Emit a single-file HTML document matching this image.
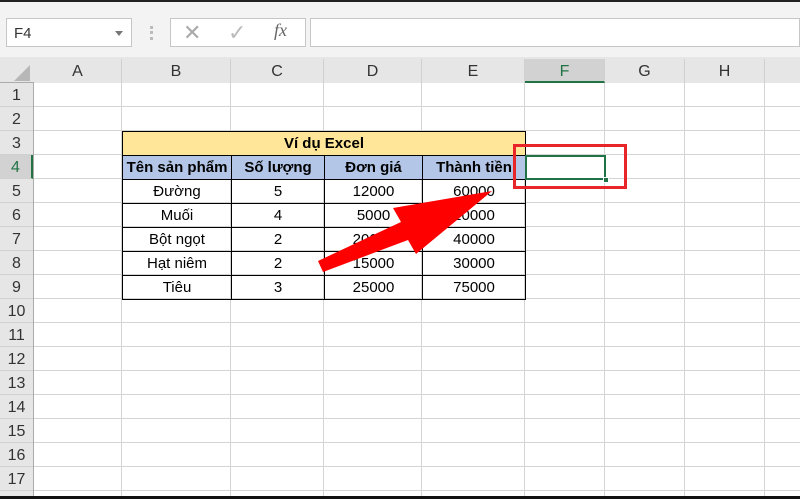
<!DOCTYPE html><html style="width:800px;height:499px;overflow:hidden"><head><meta charset="utf-8"><style>
*{margin:0;padding:0;box-sizing:border-box}
body{width:800px;height:499px;overflow:hidden;background:#e6e6e6;font-family:"Liberation Sans","DejaVu Sans",sans-serif;position:relative}
.a{position:absolute}
.hdr{position:absolute;background:#e6e6e6;color:#333;font-size:16px;text-align:center}
.vl{position:absolute;width:1px;background:#d4d4d4}
.hl{position:absolute;height:1px;background:#d4d4d4}
.c{position:absolute;border:1px solid #000;font-size:15px;text-align:center;line-height:24px;color:#000}
</style></head><body>
<div class="a" style="left:0;top:0;width:800px;height:2px;background:#222"></div>
<div class="a" style="left:0;top:2px;width:800px;height:55px;background:#f3f3f3"></div>
<div class="a" style="left:6px;top:18px;width:126px;height:29px;background:#fff;border:1px solid #c6c6c6;font-size:15px;padding:6px 0 0 7px;color:#333">F4<span style="position:absolute;right:8px;top:12px;border:4px solid transparent;border-top:5px solid #777"></span></div>
<div class="a" style="left:150px;top:26px;width:3px;height:14px;border-left:3px dotted #bbb"></div>
<div class="a" style="left:170px;top:18px;width:136px;height:29px;background:#fff;border:1px solid #c6c6c6"></div>
<div class="a" style="left:183px;top:20px;font-size:22px;color:#aaa">✕</div>
<div class="a" style="left:228px;top:20px;font-size:22px;color:#bbb">✓</div>
<div class="a" style="left:274px;top:20px;font-size:18px;color:#666;font-style:italic;font-family:'Liberation Serif',serif">fx</div>
<div class="a" style="left:310px;top:18px;width:490px;height:29px;background:#fff;border:1px solid #c6c6c6"></div>
<div class="a" style="left:34px;top:83px;width:766px;height:413px;background:#fff"></div>
<div class="a" style="left:0;top:59px;width:800px;height:24px;background:#e6e6e6;border-bottom:1px solid #ababab"></div>
<div class="a" style="left:0;top:83px;width:34px;height:413px;background:#e6e6e6;border-right:1px solid #ababab"></div>
<div class="a" style="left:14px;top:65px;width:0;height:0;border-left:16px solid transparent;border-bottom:16px solid #b7b7b7"></div>
<div id="g"></div>
<div class="a" style="left:0;top:496px;width:800px;height:3px;background:#111"></div>
<script>
var xs=[34,122,231,324,422,525,605,685,765,845],L=["A","B","C","D","E","F","G","H","I"],h="";
for(var i=0;i<9;i++){h+='<div class="hdr" style="left:'+xs[i]+'px;top:59px;width:'+(xs[i+1]-xs[i])+'px;height:24px;line-height:25px;border-right:1px solid #d0d0d0;'+(i==5?'background:#d2d2d2;color:#217346;border-bottom:2px solid #217346':'')+'">'+L[i]+'</div>';
if(xs[i+1]<800)h+='<div class="vl" style="left:'+(xs[i+1]-1)+'px;top:83px;height:413px"></div>';}
for(var r=1;r<=18;r++){var y=83+24*(r-1);if(y+23<496)h+='<div class="hl" style="left:34px;top:'+(y+23)+'px;width:766px"></div>';
if(r<=17)h+='<div class="hdr" style="left:0;top:'+y+'px;width:33px;height:24px;line-height:26px;border-bottom:1px solid #d0d0d0;'+(r==4?'background:#d2d2d2;color:#217346;border-right:2px solid #217346':'')+'">'+r+'</div>';}
document.getElementById('g').innerHTML=h;
</script>
<div class="c" style="left:122px;top:131px;width:404px;height:25px;background:#ffe699;font-weight:bold">Ví dụ Excel</div>
<div class="c" style="left:122px;top:155px;width:110px;height:25px;background:#b4c6e7;font-weight:bold;white-space:nowrap">Tên sản phẩm</div>
<div class="c" style="left:231px;top:155px;width:94px;height:25px;background:#b4c6e7;font-weight:bold">Số lượng</div>
<div class="c" style="left:324px;top:155px;width:99px;height:25px;background:#b4c6e7;font-weight:bold">Đơn giá</div>
<div class="c" style="left:422px;top:155px;width:104px;height:25px;background:#b4c6e7;font-weight:bold;white-space:nowrap;overflow:hidden">Thành tiền</div>
<div id="t"></div>
<script>
var d=[["Đường",5,12000,60000],["Muối",4,5000,20000],["Bột ngọt",2,20000,40000],["Hạt niêm",2,15000,30000],["Tiêu",3,25000,75000]],s="";
var cx=[[122,110],[231,94],[324,99],[422,104]];
for(var r=0;r<5;r++)for(var c=0;c<4;c++)s+='<div class="c" style="left:'+cx[c][0]+'px;top:'+(179+24*r)+'px;width:'+cx[c][1]+'px;height:25px">'+d[r][c]+'</div>';
document.getElementById('t').innerHTML=s;
</script>
<div class="a" style="left:525px;top:155px;width:81px;height:25px;border:2px solid #217346"></div>
<div class="a" style="left:603px;top:177px;width:6px;height:6px;background:#217346;border:1px solid #fff"></div>
<div class="a" style="left:513px;top:144px;width:114px;height:45px;border:3px solid #e8262a"></div>
<svg class="a" style="left:0;top:0" width="800" height="499"><polygon points="318,261 401,222 393,208 492,191 416,254 408,240 323,272" fill="#f00"/></svg>
</body></html>
